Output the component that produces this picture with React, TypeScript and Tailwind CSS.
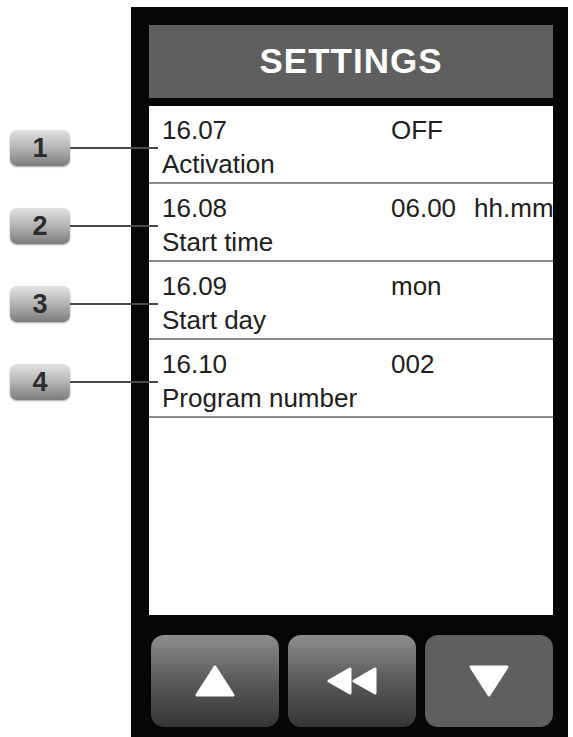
type SettingRow = {
  id: number;
  code: string;
  label: string;
  value: string;
  unit?: string;
};

const rows: SettingRow[] = [
  { id: 1, code: "16.07", label: "Activation", value: "OFF" },
  { id: 2, code: "16.08", label: "Start time", value: "06.00", unit: "hh.mm" },
  { id: 3, code: "16.09", label: "Start day", value: "mon" },
  { id: 4, code: "16.10", label: "Program number", value: "002" },
];

function Callout({ n }: { n: number }) {
  return (
    <>
      <div className="absolute left-[-139px] top-[24px] flex h-[36px] w-[60px] items-center justify-center rounded-[7px] bg-gradient-to-b from-[#e2e2e2] via-[#b4b4b4] to-[#7c7c7c] text-[27px] font-semibold text-[#2c2c2c] shadow-[0_1px_2px_rgba(0,0,0,0.35)]">
        {n}
      </div>
      <div className="absolute left-[-79px] top-[41px] h-[2px] w-[88px] bg-[#4a4a4a]" />
    </>
  );
}

function Row({ row }: { row: SettingRow }) {
  return (
    <div className="relative h-[78px] border-b-2 border-[#8c8c8c] pl-[13px] pt-[7px] text-[26px] leading-[34px] text-[#202020]">
      <Callout n={row.id} />
      <div className="flex whitespace-nowrap">
        <span className="w-[229px] shrink-0">{row.code}</span>
        <span className="flex min-w-0 flex-1 gap-[18px] overflow-hidden">
          <span>{row.value}</span>
          {row.unit && <span>{row.unit}</span>}
        </span>
      </div>
      <div className="whitespace-nowrap">{row.label}</div>
    </div>
  );
}

function NavButton({ pressed, children }: { pressed?: boolean; children: React.ReactNode }) {
  return (
    <button
      className={
        pressed
          ? "flex h-[92px] w-[128px] items-center justify-center rounded-[13px] bg-[#5f5f5f]"
          : "flex h-[92px] w-[128px] items-center justify-center rounded-[13px] bg-gradient-to-b from-[#8e8e8e] via-[#5a5a5a] to-[#363636]"
      }
    >
      {children}
    </button>
  );
}

export default function App() {
  return (
    <div className="h-[737px] w-[573px] overflow-hidden bg-white font-['Liberation_Sans',Arial,sans-serif]">
      <div className="ml-[131px] mt-[7px] flex h-[730px] w-[437px] flex-col bg-[#060606] pl-[18px] pr-[15px] pt-[18px]">
        <header className="flex h-[73px] shrink-0 items-center justify-center bg-[#5f5f5f] text-[35px] font-bold tracking-[1px] text-white">
          SETTINGS
        </header>

        <div className="mt-[8px] h-[509px] shrink-0 bg-white">
          {rows.map((row) => (
            <Row key={row.id} row={row} />
          ))}
        </div>

        <div className="ml-[2px] mt-[20px] flex gap-[9px]">
          <NavButton>
            <svg width="42" height="34" viewBox="0 0 42 34">
              <polygon points="21,3 39,31 3,31" fill="white" stroke="white" strokeWidth="3" strokeLinejoin="round" />
            </svg>
          </NavButton>
          <NavButton>
            <svg width="52" height="30" viewBox="0 0 52 30">
              <polygon points="3,15 24,3 24,27" fill="white" stroke="white" strokeWidth="3" strokeLinejoin="round" />
              <polygon points="28,15 49,3 49,27" fill="white" stroke="white" strokeWidth="3" strokeLinejoin="round" />
            </svg>
          </NavButton>
          <NavButton pressed>
            <svg width="42" height="34" viewBox="0 0 42 34">
              <polygon points="3,3 39,3 21,31" fill="white" stroke="white" strokeWidth="3" strokeLinejoin="round" />
            </svg>
          </NavButton>
        </div>
      </div>
    </div>
  );
}
